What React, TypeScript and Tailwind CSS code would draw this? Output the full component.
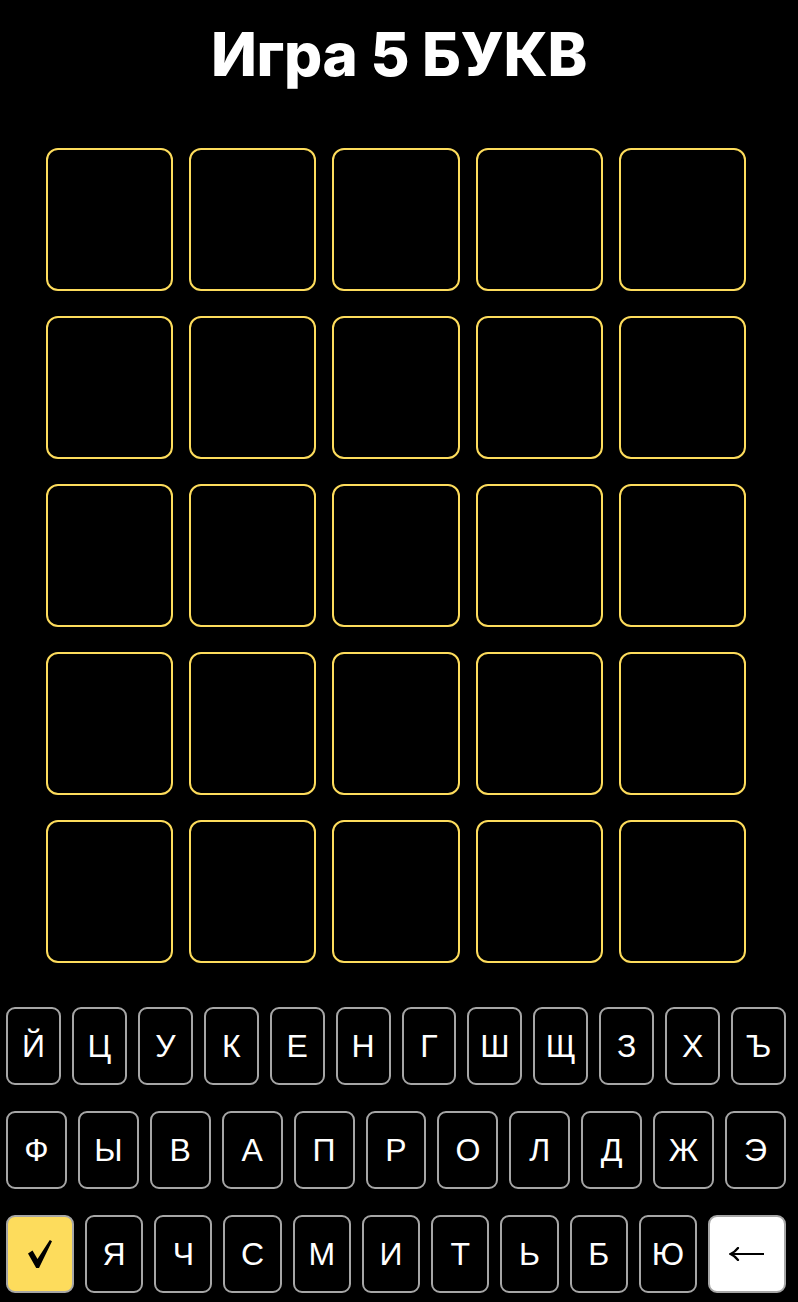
import React from "react";

const row1 = ["Й", "Ц", "У", "К", "Е", "Н", "Г", "Ш", "Щ", "З", "Х", "Ъ"];
const row2 = ["Ф", "Ы", "В", "А", "П", "Р", "О", "Л", "Д", "Ж", "Э"];
const row3 = ["Я", "Ч", "С", "М", "И", "Т", "Ь", "Б", "Ю"];

function Key({ ch }: { ch: string }) {
  return (
    <div className="flex-1 h-[78px] rounded-[9px] border-2 border-[#a6a6a6] bg-black flex items-center justify-center text-white text-[32px] font-['Liberation_Sans',Arial,sans-serif]">
      {ch}
    </div>
  );
}

export default function App() {
  return (
    <div className="w-full h-[1302px] bg-black flex flex-col overflow-hidden">
      <h1 className="pt-[18px] text-center text-white text-[60px] leading-[73px] font-extrabold font-['Inter',sans-serif] tracking-[-0.3px]">
        Игра 5 БУКВ
      </h1>
      <div className="ml-[46px] mt-[57px] w-[700px] grid grid-cols-5 gap-x-[16px] gap-y-[25px]">
        {Array.from({ length: 25 }).map((_, i) => (
          <div key={i} className="h-[143px] rounded-[12px] border-2 border-[#fddc5c]" />
        ))}
      </div>
      <div className="mt-[44px] px-[6px] flex flex-col gap-[26px] w-[792px]">
        <div className="flex gap-[11px]">
          {row1.map((c) => (
            <Key key={c} ch={c} />
          ))}
        </div>
        <div className="flex gap-[11px]">
          {row2.map((c) => (
            <Key key={c} ch={c} />
          ))}
        </div>
        <div className="flex gap-[11px]">
          <div className="w-[68px] shrink-0 h-[78px] rounded-[9px] border-2 border-[#a6a6a6] bg-[#fddc5c] flex items-center justify-center">
            <svg width="24" height="28" viewBox="0 0 24 28" aria-label="✓">
              <path d="M0 13.5 L4.5 10.5 L9.5 19 L21.8 0 L24 1.2 L11 28 L8.2 28 Z" fill="#000" />
            </svg>
          </div>
          {row3.map((c) => (
            <Key key={c} ch={c} />
          ))}
          <div className="w-[78px] shrink-0 h-[78px] rounded-[9px] border-2 border-[#a6a6a6] bg-white flex items-center justify-center">
            <svg width="36" height="14" viewBox="0 0 36 14" aria-label="←">
              <path d="M2 7 H35" stroke="#000" strokeWidth="2.2" />
              <path d="M9 1 Q6 5 1.5 7 Q6 9 9 13" stroke="#000" strokeWidth="2.2" fill="none" strokeLinecap="round" />
            </svg>
          </div>
        </div>
      </div>
    </div>
  );
}
